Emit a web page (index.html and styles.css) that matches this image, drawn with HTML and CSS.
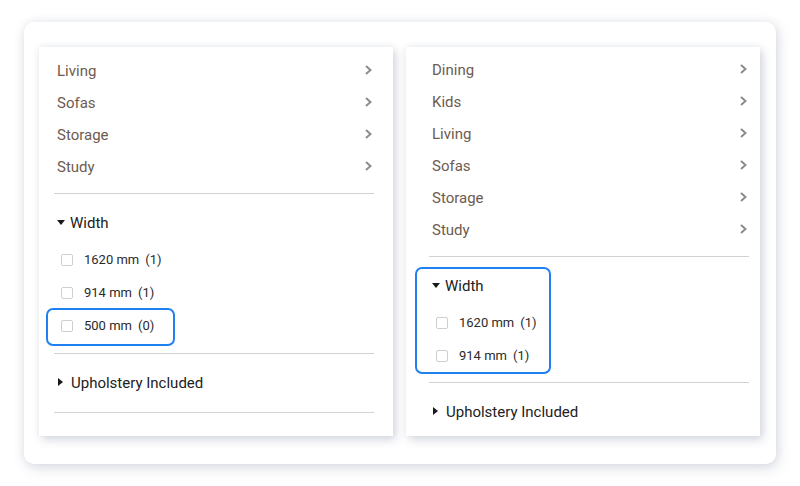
FILE: index.html
```html
<!DOCTYPE html>
<html>
<head>
<meta charset="utf-8">
<link rel="stylesheet" href="styles.css">
</head>
<body>
<div class="card">
  <div class="panel panel-a">
    <ul class="cats">
      <li class="cat"><span>Living</span><svg class="chev" viewBox="0 0 7 10"><polyline points="1,1 5.5,5 1,9"/></svg></li>
      <li class="cat"><span>Sofas</span><svg class="chev" viewBox="0 0 7 10"><polyline points="1,1 5.5,5 1,9"/></svg></li>
      <li class="cat"><span>Storage</span><svg class="chev" viewBox="0 0 7 10"><polyline points="1,1 5.5,5 1,9"/></svg></li>
      <li class="cat"><span>Study</span><svg class="chev" viewBox="0 0 7 10"><polyline points="1,1 5.5,5 1,9"/></svg></li>
    </ul>
    <div class="divider"></div>
    <div class="facet-head"><span class="caret-down"></span>Width</div>
    <ul class="opts">
      <li class="opt"><span class="box"></span><span class="lbl">1620 mm</span><span class="cnt">(1)</span></li>
      <li class="opt"><span class="box"></span><span class="lbl">914 mm</span><span class="cnt">(1)</span></li>
      <li class="opt"><span class="box"></span><span class="lbl">500 mm</span><span class="cnt">(0)</span></li>
    </ul>
    <div class="divider"></div>
    <div class="facet-head"><span class="caret-right"></span>Upholstery Included</div>
    <div class="divider divider-end"></div>
    <span class="hl hl-a"></span>
  </div>
  <div class="panel panel-b">
    <ul class="cats">
      <li class="cat"><span>Dining</span><svg class="chev" viewBox="0 0 7 10"><polyline points="1,1 5.5,5 1,9"/></svg></li>
      <li class="cat"><span>Kids</span><svg class="chev" viewBox="0 0 7 10"><polyline points="1,1 5.5,5 1,9"/></svg></li>
      <li class="cat"><span>Living</span><svg class="chev" viewBox="0 0 7 10"><polyline points="1,1 5.5,5 1,9"/></svg></li>
      <li class="cat"><span>Sofas</span><svg class="chev" viewBox="0 0 7 10"><polyline points="1,1 5.5,5 1,9"/></svg></li>
      <li class="cat"><span>Storage</span><svg class="chev" viewBox="0 0 7 10"><polyline points="1,1 5.5,5 1,9"/></svg></li>
      <li class="cat"><span>Study</span><svg class="chev" viewBox="0 0 7 10"><polyline points="1,1 5.5,5 1,9"/></svg></li>
    </ul>
    <div class="divider"></div>
    <div class="facet-head"><span class="caret-down"></span>Width</div>
    <ul class="opts">
      <li class="opt"><span class="box"></span><span class="lbl">1620 mm</span><span class="cnt">(1)</span></li>
      <li class="opt"><span class="box"></span><span class="lbl">914 mm</span><span class="cnt">(1)</span></li>
    </ul>
    <div class="divider divider-tight"></div>
    <div class="facet-head"><span class="caret-right"></span>Upholstery Included</div>
    <span class="hl hl-b"></span>
  </div>
</div>
</body>
</html>
```

FILE: styles.css
```css
* { box-sizing: border-box; }
html, body { margin: 0; padding: 0; background: #ffffff; }
body {
  font-family: Roboto, "Liberation Sans", Arial, sans-serif;
  width: 800px;
  height: 486px;
  overflow: hidden;
}
ul { list-style: none; margin: 0; padding: 0; }

.card {
  margin: 22px 0 0 24px;
  width: 752px;
  height: 442px;
  padding: 25px 16px 0 15px;
  background: #fff;
  border-radius: 10px;
  box-shadow: 2px 4px 14px rgba(60, 70, 110, 0.18), 0 0 8px rgba(60, 70, 110, 0.07);
  display: flex;
  gap: 13px;
  align-items: flex-start;
}

.panel {
  position: relative;
  width: 354px;
  height: 389px;
  background: #fff;
  box-shadow: 3px 4px 9px rgba(55, 65, 105, 0.2), 0 -1px 6px rgba(55, 65, 105, 0.07);
}
.panel-a { padding: 7px 19px 0 15px; }
.panel-b { padding: 6px 11px 0 23px; }

.cat {
  height: 32px;
  display: flex;
  align-items: center;
  justify-content: space-between;
  padding: 2px 2px 0 3px;
  font-size: 15px;
  color: #6e5b4f;
}
.chev {
  width: 7px;
  height: 10px;
  fill: none;
  stroke: #8c8c8c;
  stroke-width: 2;
  margin-top: -2px;
}

.divider {
  height: 1px;
  background: #d2d2d2;
  margin-top: 11px;
}
.divider-tight { margin-top: 10px; }
.divider-end { margin-top: 15px; }

.facet-head {
  margin-top: 13px;
  height: 30px;
  display: flex;
  align-items: center;
  padding: 2px 0 0 3px;
  font-size: 15px;
  color: #212121;
}
.caret-down {
  width: 0;
  height: 0;
  border-left: 4.5px solid transparent;
  border-right: 4.5px solid transparent;
  border-top: 5px solid #1a1a1a;
  margin: -2px 5px 0 0;
}
.caret-right {
  width: 0;
  height: 0;
  border-top: 4.5px solid transparent;
  border-bottom: 4.5px solid transparent;
  border-left: 5px solid #1a1a1a;
  margin: -2px 8px 0 1px;
}

.opts { margin-top: 6px; }
.opt {
  height: 33px;
  display: flex;
  align-items: center;
  padding-left: 7px;
  font-size: 13px;
  color: #2a2a2a;
}
.box {
  width: 12px;
  height: 12px;
  border: 1px solid #cfcfcf;
  border-radius: 2px;
  margin-right: 11px;
}
.cnt { margin-left: 6px; }

.hl {
  position: absolute;
  border: 2px solid #1f80f2;
  border-radius: 7px;
  pointer-events: none;
}
.hl-a { left: 7px; top: 261px; width: 129px; height: 38px; }
.hl-b { left: 9px; top: 220px; width: 136px; height: 107px; }
```
